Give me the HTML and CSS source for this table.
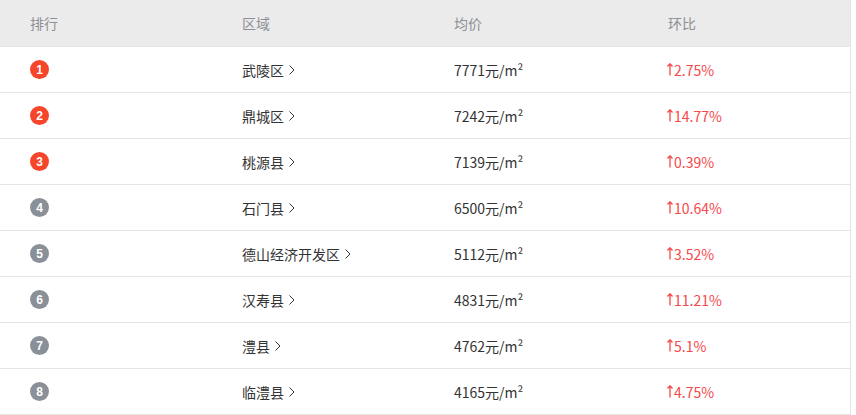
FILE: index.html
```html
<!DOCTYPE html>
<html lang="zh">
<head>
<meta charset="utf-8">
<link rel="stylesheet" href="styles.css">
</head>
<body>
<div class="wrap">
  <div class="table">
    <div class="row head">
      <div class="cell">排行</div>
      <div class="cell">区域</div>
      <div class="cell">均价</div>
      <div class="cell">环比</div>
    </div>
    <div class="row">
      <div class="cell"><span class="badge top">1</span></div>
      <div class="cell name">武陵区<svg class="chev" viewBox="0 0 6 10"><path d="M0.5 0.5 L5 5 L0.5 9.5"/></svg></div>
      <div class="cell price">7771元/m²</div>
      <div class="cell up"><svg class="arr" viewBox="0 0 6 13"><path d="M3 12.5 V1 M0.5 3.5 L3 0.8 L5.5 3.5"/></svg>2.75%</div>
    </div>
    <div class="row">
      <div class="cell"><span class="badge top">2</span></div>
      <div class="cell name">鼎城区<svg class="chev" viewBox="0 0 6 10"><path d="M0.5 0.5 L5 5 L0.5 9.5"/></svg></div>
      <div class="cell price">7242元/m²</div>
      <div class="cell up"><svg class="arr" viewBox="0 0 6 13"><path d="M3 12.5 V1 M0.5 3.5 L3 0.8 L5.5 3.5"/></svg>14.77%</div>
    </div>
    <div class="row">
      <div class="cell"><span class="badge top">3</span></div>
      <div class="cell name">桃源县<svg class="chev" viewBox="0 0 6 10"><path d="M0.5 0.5 L5 5 L0.5 9.5"/></svg></div>
      <div class="cell price">7139元/m²</div>
      <div class="cell up"><svg class="arr" viewBox="0 0 6 13"><path d="M3 12.5 V1 M0.5 3.5 L3 0.8 L5.5 3.5"/></svg>0.39%</div>
    </div>
    <div class="row">
      <div class="cell"><span class="badge">4</span></div>
      <div class="cell name">石门县<svg class="chev" viewBox="0 0 6 10"><path d="M0.5 0.5 L5 5 L0.5 9.5"/></svg></div>
      <div class="cell price">6500元/m²</div>
      <div class="cell up"><svg class="arr" viewBox="0 0 6 13"><path d="M3 12.5 V1 M0.5 3.5 L3 0.8 L5.5 3.5"/></svg>10.64%</div>
    </div>
    <div class="row">
      <div class="cell"><span class="badge">5</span></div>
      <div class="cell name">德山经济开发区<svg class="chev" viewBox="0 0 6 10"><path d="M0.5 0.5 L5 5 L0.5 9.5"/></svg></div>
      <div class="cell price">5112元/m²</div>
      <div class="cell up"><svg class="arr" viewBox="0 0 6 13"><path d="M3 12.5 V1 M0.5 3.5 L3 0.8 L5.5 3.5"/></svg>3.52%</div>
    </div>
    <div class="row">
      <div class="cell"><span class="badge">6</span></div>
      <div class="cell name">汉寿县<svg class="chev" viewBox="0 0 6 10"><path d="M0.5 0.5 L5 5 L0.5 9.5"/></svg></div>
      <div class="cell price">4831元/m²</div>
      <div class="cell up"><svg class="arr" viewBox="0 0 6 13"><path d="M3 12.5 V1 M0.5 3.5 L3 0.8 L5.5 3.5"/></svg>11.21%</div>
    </div>
    <div class="row">
      <div class="cell"><span class="badge">7</span></div>
      <div class="cell name">澧县<svg class="chev" viewBox="0 0 6 10"><path d="M0.5 0.5 L5 5 L0.5 9.5"/></svg></div>
      <div class="cell price">4762元/m²</div>
      <div class="cell up"><svg class="arr" viewBox="0 0 6 13"><path d="M3 12.5 V1 M0.5 3.5 L3 0.8 L5.5 3.5"/></svg>5.1%</div>
    </div>
    <div class="row">
      <div class="cell"><span class="badge">8</span></div>
      <div class="cell name">临澧县<svg class="chev" viewBox="0 0 6 10"><path d="M0.5 0.5 L5 5 L0.5 9.5"/></svg></div>
      <div class="cell price">4165元/m²</div>
      <div class="cell up"><svg class="arr" viewBox="0 0 6 13"><path d="M3 12.5 V1 M0.5 3.5 L3 0.8 L5.5 3.5"/></svg>4.75%</div>
    </div>
  </div>
</div>
</body>
</html>
```
FILE: styles.css
```css
html, body {
  margin: 0;
  padding: 0;
  background: #fff;
}
body {
  font-family: "Noto Sans CJK SC", "Microsoft YaHei", sans-serif;
  font-size: 14px;
  color: #333;
}
.wrap {
  width: 851px;
  border-right: 1px solid #e3e3e3;
  box-sizing: border-box;
}
.table {
  width: 850px;
}
.row {
  display: grid;
  grid-template-columns: 212px 212px 214px 212px;
  height: 46px;
  border-bottom: 1px solid #e5e5e5;
  box-sizing: border-box;
  align-items: center;
}
.head {
  background: #ebebeb;
  color: #8c9096;
  height: 47px;
}
.cell {
  padding-left: 30px;
  display: flex;
  align-items: center;
  line-height: 20px;
}
.badge {
  width: 19px;
  height: 19px;
  border-radius: 50%;
  background: #8a9098;
  color: #fff;
  font-family: "Liberation Sans", Arial, sans-serif;
  font-weight: bold;
  font-size: 12px;
  display: flex;
  align-items: center;
  justify-content: center;
}
.badge.top {
  background: #f5452a;
}
.chev {
  width: 6px;
  height: 10px;
  margin-left: 5px;
  fill: none;
  stroke: #333;
  stroke-width: 1;
}
.up {
  color: #f5484a;
}
.arr {
  width: 6px;
  height: 13px;
  margin-right: 1px;
  margin-left: -1px;
  fill: none;
  stroke: #f5484a;
  stroke-width: 1.3;
}
```
